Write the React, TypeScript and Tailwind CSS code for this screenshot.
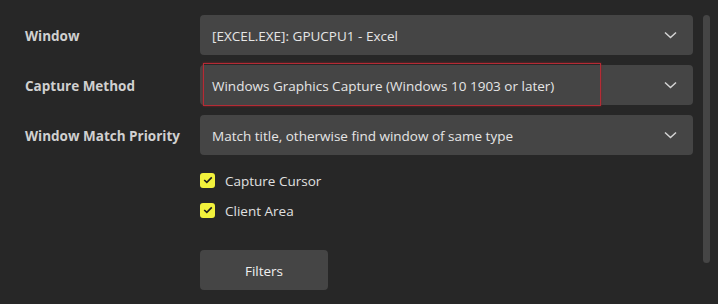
const font = { fontFamily: '"Open Sans", "Noto Sans", sans-serif' };

function Chevron() {
  return (
    <svg width="13" height="8" viewBox="0 0 13 8" className="shrink-0">
      <path d="M1 1.5 L6.5 6.5 L12 1.5" fill="none" stroke="#d4d4d4" strokeWidth="1.5" />
    </svg>
  );
}

function Select({ value, highlight }: { value: string; highlight?: boolean }) {
  return (
    <div className="relative h-10 rounded bg-[#454545] flex items-center justify-between pl-3 pr-[16px]">
      <span className="pt-[2px] text-[13.5px] text-[#e6e6e6]">{value}</span>
      <Chevron />
      {highlight && (
        <div className="absolute left-[3px] top-[-2px] w-[398px] h-[43px] border border-[#b52b35] shadow-[0_0_2px_#8a2028]" />
      )}
    </div>
  );
}

function Check({ label }: { label: string }) {
  return (
    <div className="h-[30px] flex items-center gap-[10px]">
      <div className="w-[15px] h-[15px] rounded-[3px] bg-[#f2f23c] flex items-center justify-center">
        <svg width="10" height="8" viewBox="0 0 10 8">
          <path d="M1.2 4 L3.8 6.4 L8.8 1.4" fill="none" stroke="#1e1e1e" strokeWidth="1.6" />
        </svg>
      </div>
      <span className="pt-[2px] text-[13.5px] text-[#e0e0e0]">{label}</span>
    </div>
  );
}

export default function App() {
  const rows = [
    { label: 'Window', value: '[EXCEL.EXE]: GPUCPU1 - Excel' },
    { label: 'Capture Method', value: 'Windows Graphics Capture (Windows 10 1903 or later)', highlight: true },
    { label: 'Window Match Priority', value: 'Match title, otherwise find window of same type' },
  ];

  return (
    <div className="w-[718px] h-[304px] bg-[#272727] flex overflow-hidden" style={font}>
      <div className="flex-1 pl-[25px] pt-[15px]">
        <div className="grid grid-cols-[175px_1fr] gap-y-[10px]">
          {rows.map((r) => (
            <div key={r.label} className="contents">
              <div className="h-10 pt-[2px] flex items-center text-[13.5px] font-bold text-[#d0d0d0]">{r.label}</div>
              <Select value={r.value} highlight={r.highlight} />
            </div>
          ))}
        </div>
        <div className="ml-[175px] mt-[10px]">
          <Check label="Capture Cursor" />
          <Check label="Client Area" />
          <button className="mt-[25px] w-32 h-10 pt-[2px] rounded bg-[#454545] text-[13.5px] text-[#f0f0f0]">Filters</button>
        </div>
      </div>
      <div className="w-[7px] ml-[10px] mr-[8px] pt-[15px]">
        <div className="h-[248px] rounded-full bg-[#454545]" />
      </div>
    </div>
  );
}
